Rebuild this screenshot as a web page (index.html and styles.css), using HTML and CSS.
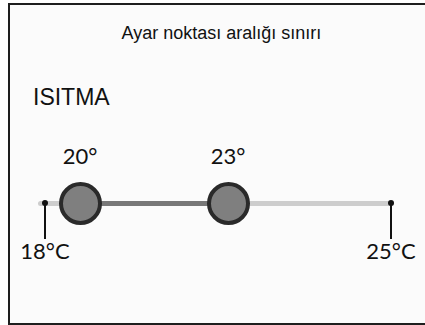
FILE: index.html
```html
<!DOCTYPE html>
<html lang="tr">
<head>
    <meta charset="UTF-8">
    <meta name="viewport" content="width=device-width, initial-scale=1.0">
    <title>Ayar noktası aralığı sınırı</title>
    <link rel="stylesheet" href="styles.css">
</head>
<body>
    <div class="frame">
        <h1 class="title">Ayar noktası aralığı sınırı</h1>
        <h2 class="mode">ISITMA</h2>

        <div class="slider">
            <div class="track"></div>
            <div class="range"></div>

            <div class="tick tick-min"></div>
            <div class="tick tick-max"></div>

            <div class="value value-low">20°</div>
            <div class="value value-high">23°</div>

            <div class="knob knob-low"></div>
            <div class="knob knob-high"></div>

            <div class="limit limit-min">18°C</div>
            <div class="limit limit-max">25°C</div>
        </div>
    </div>
</body>
</html>
```

FILE: styles.css
```css
body {
    margin: 0;
    padding: 0;
    background-color: #ffffff;
    font-family: "Liberation Sans", Arial, sans-serif;
    color: #111;
    overflow: hidden;
}

.frame {
    box-sizing: border-box;
    margin: 3px 0 0 8px;
    width: 417px;
    height: 322px;
    border: 2px solid #1e1e1e;
    border-right: none;
    background-color: #fbfbfb;
}

.title {
    margin: 0;
    padding: 17px 0 0 8px;
    font-size: 18px;
    font-weight: normal;
    text-align: center;
    line-height: 22px;
}

.mode {
    margin: 0;
    padding: 40px 0 0 23px;
    font-size: 23px;
    font-weight: normal;
    line-height: 26px;
}

/* slider area */
.slider {
    position: relative;
    margin-top: 16px;
    height: 170px;
    font-family: Lato, "DejaVu Sans", sans-serif;
}

.track {
    position: absolute;
    left: 28px;
    width: 356px;
    top: 75px;
    height: 5px;
    border-radius: 3px;
    background-color: #cdcdcd;
}

.range {
    position: absolute;
    left: 70px;
    width: 149px;
    top: 75px;
    height: 5px;
    background-color: #787878;
}

.tick {
    position: absolute;
    top: 75px;
    width: 2px;
    height: 38px;
    background-color: #111;
}

.tick::before {
    content: "";
    position: absolute;
    left: -2px;
    top: -1px;
    width: 6px;
    height: 6px;
    border-radius: 50%;
    background-color: #111;
}

.tick-min { left: 34px; }
.tick-max { left: 380px; }

.knob {
    position: absolute;
    top: 56px;
    width: 35px;
    height: 35px;
    border: 4px solid #2a2a2a;
    border-radius: 50%;
    background-color: #7f7f7f;
}

.knob-low { left: 49px; }
.knob-high { left: 197px; }

.value {
    position: absolute;
    top: 18px;
    width: 60px;
    text-align: center;
    font-size: 22px;
    line-height: 24px;
}

.value-low { left: 40px; }
.value-high { left: 188px; }

.limit {
    position: absolute;
    top: 113px;
    width: 70px;
    text-align: center;
    font-size: 22px;
    line-height: 24px;
}

.limit-min { left: 0px; }
.limit-max { left: 346px; }
```
